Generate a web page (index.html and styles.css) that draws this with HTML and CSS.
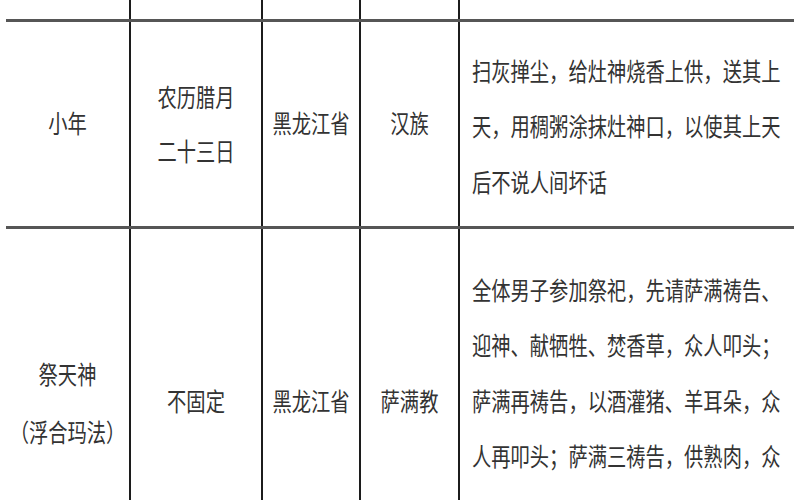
FILE: index.html
```html
<!DOCTYPE html>
<html lang="zh">
<head>
<meta charset="utf-8">
<link rel="stylesheet" href="styles.css">
</head>
<body>
<div class="tbl">
  <div class="row row-top">
    <div class="cell c1"></div>
    <div class="cell c2"></div>
    <div class="cell c3"></div>
    <div class="cell c4"></div>
    <div class="cell c5"></div>
  </div>
  <div class="row row-a">
    <div class="cell c1 mid"><span class="txt">小年</span></div>
    <div class="cell c2 mid"><span class="txt">农历腊月<br>二十三日</span></div>
    <div class="cell c3 mid"><span class="txt">黑龙江省</span></div>
    <div class="cell c4 mid"><span class="txt">汉族</span></div>
    <div class="cell c5 desc"><span class="txt">扫灰掸尘，给灶神烧香上供，送其上<br>天，用稠粥涂抹灶神口，以使其上天<br>后不说人间坏话</span></div>
  </div>
  <div class="row row-b">
    <div class="cell c1 mid tall"><span class="txt">祭天神<br>（浮合玛法）</span></div>
    <div class="cell c2 mid"><span class="txt">不固定</span></div>
    <div class="cell c3 mid"><span class="txt">黑龙江省</span></div>
    <div class="cell c4 mid"><span class="txt">萨满教</span></div>
    <div class="cell c5 desc"><span class="txt">全体男子参加祭祀，先请萨满祷告、<br>迎神、献牺牲、焚香草，众人叩头；<br>萨满再祷告，以酒灌猪、羊耳朵，众<br>人再叩头；萨满三祷告，供熟肉，众<br>人叩头谢神</span></div>
  </div>
</div>
</body>
</html>
```

FILE: styles.css
```css
html, body {
  margin: 0;
  padding: 0;
  background: #ffffff;
  overflow: hidden;
}

body {
  width: 800px;
  height: 500px;
  font-family: "Noto Sans CJK SC", "Noto Sans CJK TC", sans-serif;
  color: #333333;
}

.tbl {
  margin-left: 6px;
  width: 788px;
}

.row {
  display: grid;
  grid-template-columns: 125px 132px 98px 99px 334px;
  box-sizing: border-box;
}

.row-top {
  height: 19px;
}

.row-a {
  height: 210px;
  border-top: 3px solid #565656;
  border-bottom: 3px solid #565656;
}

.row-b {
  height: 346px;
}

.cell {
  box-sizing: border-box;
  border-right: 2px solid #1c1c1c;
}

.c5 {
  border-right: none;
}

.mid {
  display: flex;
  align-items: center;
  justify-content: center;
  text-align: center;
  font-size: 19.3px;
  line-height: 41.5px;
}

.mid.tall {
  line-height: 44.5px;
}

.desc {
  display: flex;
  align-items: center;
  padding-left: 12px;
  font-size: 19.3px;
  line-height: 43.4px;
  white-space: nowrap;
}

.row-a .desc {
  padding-top: 6px;
}

.txt {
  display: inline-block;
  transform: scaleY(1.28);
}
```
